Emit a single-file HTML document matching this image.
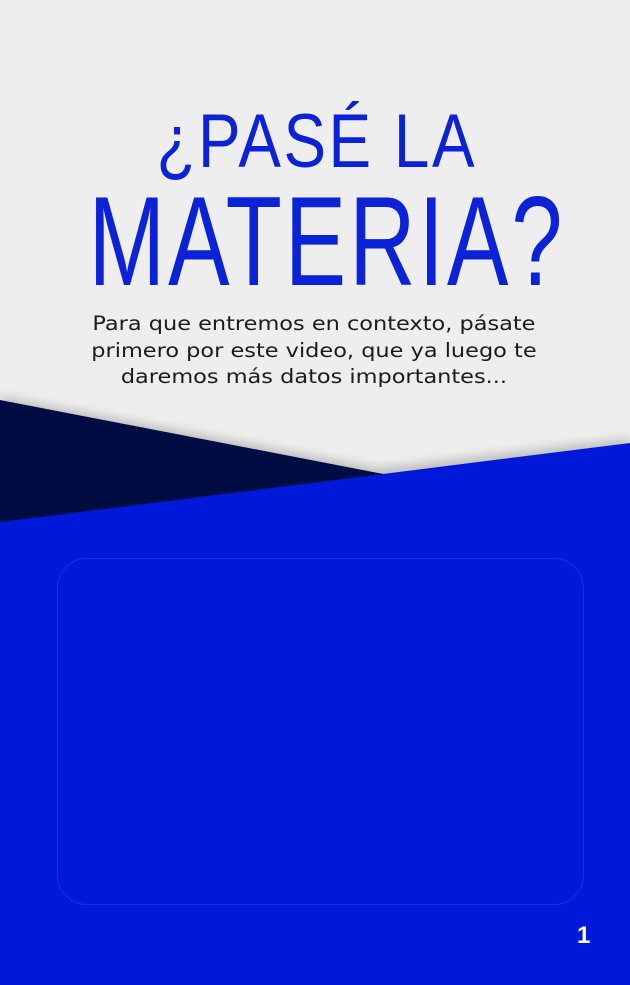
<!DOCTYPE html>
<html><head><meta charset="utf-8"><style>
html,body{margin:0;padding:0}
body{width:630px;height:985px;position:relative;overflow:hidden;background:#eeeeee;font-family:"Liberation Sans",sans-serif}
.t1,.t2{position:absolute;left:0;width:630px;text-align:center;color:#0b22d6;white-space:nowrap;line-height:1}
.t1{top:104px;font-size:76px;transform:scaleX(0.84);letter-spacing:3px;transform-origin:326px 0}
.t2{top:178px;font-size:127px;transform:scaleX(0.725);letter-spacing:4px;transform-origin:322px 0}
.p{position:absolute;top:311px;left:0;width:630px;text-align:center;font-family:"DejaVu Sans",sans-serif;font-size:19.5px;line-height:26.5px;color:#1b1b1b;transform:scaleX(1.15);transform-origin:322px 0}
.box{position:absolute;left:57px;top:558px;width:527px;height:347px;border:1px solid #1530e6;border-radius:30px;box-sizing:border-box}
.n{position:absolute;left:577px;top:922px;color:#fff;font-weight:bold;font-size:24px}
</style></head><body>
<svg width="630" height="985" style="position:absolute;left:0;top:0">
<defs><filter id="s" x="-10%" y="-30%" width="120%" height="160%"><feGaussianBlur stdDeviation="5"/></filter></defs>
<polygon points="0,396 378,468 630,438 630,450 0,530" fill="#000" opacity="0.2" filter="url(#s)"/>
<polygon points="0,400 378,473 420,480 0,532" fill="#000c42"/>
<polygon points="0,522 630,443 630,985 0,985" fill="#0019d9"/>
</svg>
<div class="t1">¿PASÉ LA</div>
<div class="t2">MATERIA?</div>
<div class="p">Para que entremos en contexto, pásate<br>primero por este video, que ya luego te<br>daremos más datos importantes...</div>
<div class="box"></div>
<div class="n">1</div>
</body></html>
